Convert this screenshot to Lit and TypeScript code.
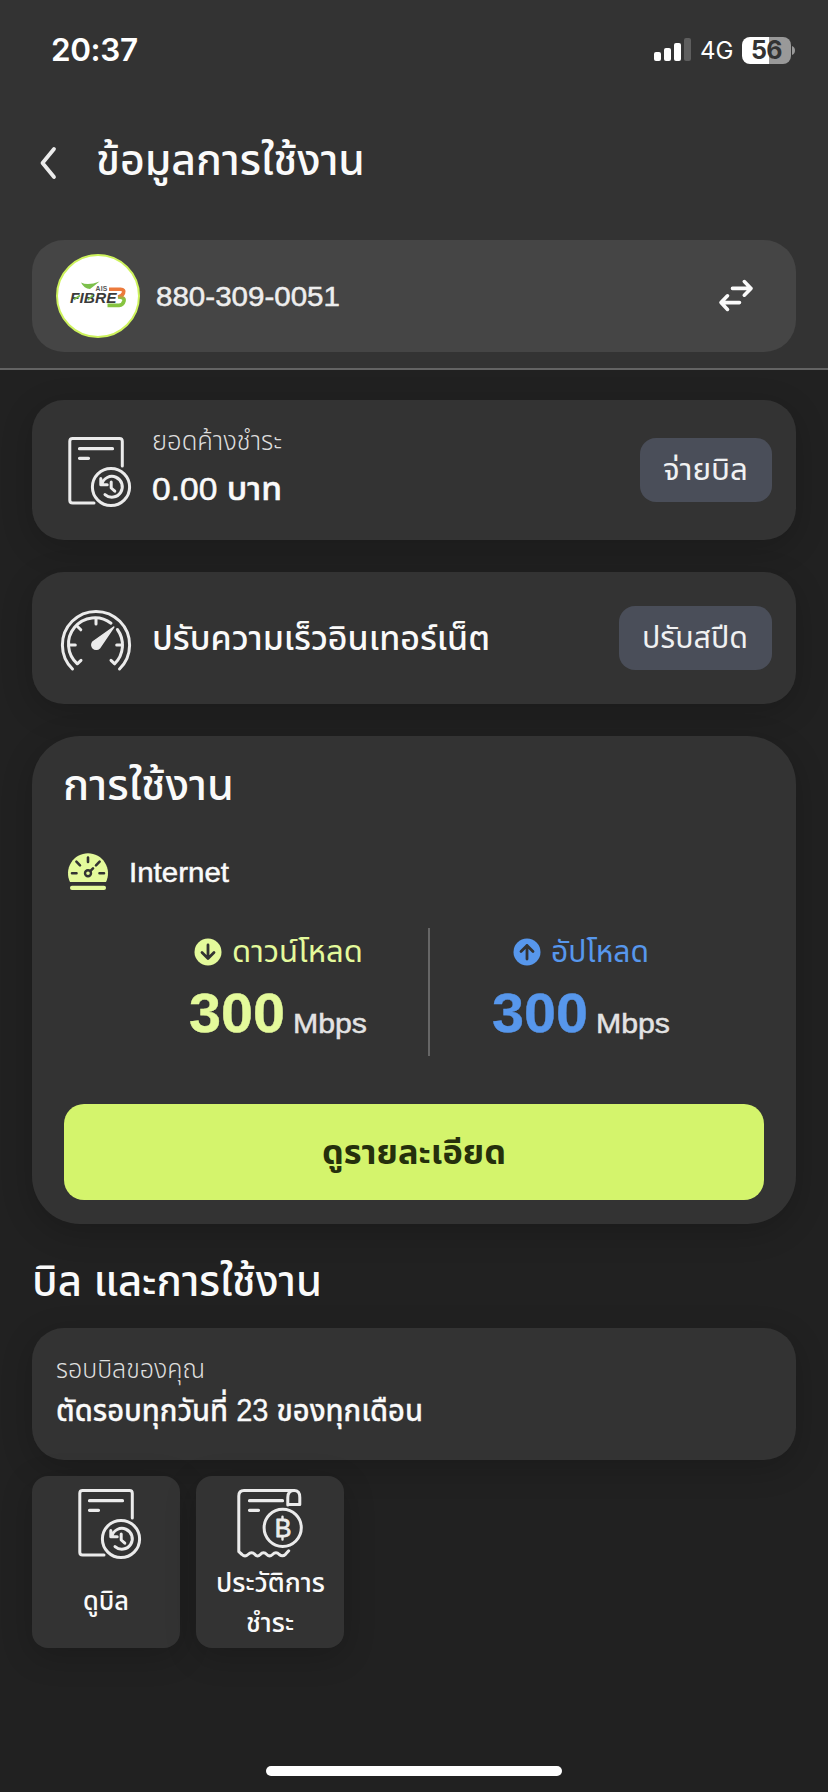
import { LitElement, html, css, svg } from "lit";
import { customElement, property } from "lit/decorators.js";

/* One line of text fitted to a given width; its box runs from the letter tops to the baseline. */
@customElement("fit-label")
class FitLabel extends LitElement {
  @property() text = "";
  @property({ type: Number }) w = 100;
  @property({ type: Number }) h = 20;
  @property({ type: Number }) size = 28;
  @property({ type: Number }) weight = 500;
  @property({ type: Number }) bolder = 0;
  static styles = css`
    :host { display: block; flex: none; }
    svg { display: block; overflow: visible; }
    text {
      font-family: "Liberation Sans", "Noto Sans Thai", sans-serif;
      fill: currentColor;
      stroke: currentColor;
      white-space: pre;
    }
  `;
  render() {
    return html`<svg width=${this.w} height=${this.h}>
      <text x="-1" y=${this.h} font-size=${this.size} font-weight=${this.weight}
        stroke-width=${this.bolder} textLength=${this.w + 2} lengthAdjust="spacingAndGlyphs">${this.text}</text>
    </svg>`;
  }
}

const sheetLines = svg`<path d="M19.5 18.7H52.5M19.5 28.3H28.5" stroke-width="3.2"/>`;

const billIcon = html`<svg class="line" width="80" height="80" viewBox="0 0 80 80">
  <path d="M62.3 36V11.3Q62.3 8.5 59.5 8.5H12.7Q9.8 8.5 9.8 11.3V70.2Q9.8 73 12.7 73H34"/>
  ${sheetLines}
  <circle cx="51" cy="57" r="18.6"/>
  <path d="M41.8 54.3A10.4 10.4 0 1 1 45 64.6M40.8 48.5V54.8H47.2M51.2 52V58L54.8 61.2"/>
</svg>`;

const historyIcon = html`<svg class="line" width="80" height="80" viewBox="0 0 80 80">
  <path d="M64 8.5H14Q8.8 8.5 8.8 14V69.7L12 72.5Q15 75.3 18 72.5Q21.7 69 25 72.5Q27.5 75.3 30.3 72.5Q33.5 69 36.8 72.5Q39.5 75.3 42.5 72.5Q46 69 49.3 72.5Q52.5 75.2 55.5 72.3L58.7 68.8"/>
  <path d="M57.8 23V15.5Q58 8.6 64 8.6T69.8 15.5V22.5H57.8"/>
  ${sheetLines}
  <circle cx="52.7" cy="45.8" r="18.6"/>
  <path d="M52.5 34.7V38M52.5 54.5V57.5" stroke-width="2.4"/>
  <text class="baht" x="53.2" y="54.6" text-anchor="middle">B</text>
</svg>`;

const gaugeIcon = html`<svg class="line" width="80" height="80" viewBox="0 0 80 80">
  <path d="M16.5 69A33.6 33.6 0 1 1 63.5 69"/>
  <path d="M25 60.3L21.3 63.8A26.4 26.4 0 0 1 55 23.2M61.4 29.5A26.4 26.4 0 0 1 58.7 63.8L55 60.3"/>
  <path d="M13.8 45H19.3M60.7 45H66.2M40 19V24M21.5 26.5L24.8 29.8"/>
  <path d="M57.8 27L43.5 48A4.3 4.3 0 1 1 37 41.8Z" fill="currentColor" stroke-width="1.4"/>
</svg>`;

const arrowBadge = (up: boolean) => html`<svg width="28" height="28" viewBox="-14 -14 28 28">
  <circle r="13.5" fill="currentColor"/>
  <path d=${up ? "M0 7V-6.5M-6 -.6L0 -6.6L6 -.6" : "M0 -7V6.5M-6 .6L0 6.6L6 .6"}
    fill="none" stroke="#333" stroke-width="2.8" stroke-linecap="round" stroke-linejoin="round"/>
</svg>`;

@customElement("app-root")
class AppRoot extends LitElement {
  static styles = css`
    :host { display: block; }
    * { box-sizing: border-box; }
    svg { display: block; flex: none; overflow: visible; }
    .screen {
      width: 828px; height: 1792px; overflow: hidden; background: #212121; color: #fafafa;
      display: flex; flex-direction: column; font-family: "Liberation Sans", "Noto Sans Thai", sans-serif;
    }
    .header { height: 370px; background: #333; border-bottom: 2px solid #636363; padding: 0 32px; flex: none; }
    .status { display: flex; align-items: center; justify-content: space-between; height: 100px; padding: 0 1px 0 19px; }
    .time { font: 600 31.5px/40px Inter, sans-serif; letter-spacing: -.4px; color: #fff; }
    .signals { display: flex; align-items: center; }
    .net { font: 400 24px/30px Inter, sans-serif; color: #fff; margin-left: 8px; width: 42px; padding-top: 1px; }
    .battery {
      width: 49px; height: 27px; border-radius: 8px; margin-right: 1px;
      background: linear-gradient(90deg, #fff 56%, #999 56%);
      font: 700 25px/27px Inter, sans-serif; letter-spacing: -.6px; color: #333; text-align: center;
    }
    .titlebar { display: flex; padding: 47px 0 0 8px; height: 140px; }
    .titlebar fit-label { margin: 3px 0 0 41px; }
    .account {
      height: 112px; border-radius: 32px; background: #454545; padding: 0 43px 0 24px;
      display: flex; align-items: center; color: #eee;
    }
    .account fit-label { margin-left: 17px; }
    .push { margin-left: auto; }
    .ais { font: 700 6.8px "Liberation Sans", sans-serif; fill: #555; }
    .fibre { font: italic 700 14px "Liberation Sans", sans-serif; }
    .content { padding: 30px 32px 0; display: flex; flex-direction: column; }
    .card { background: #333; border-radius: 32px; box-shadow: 0 8px 32px rgba(0, 0, 0, .2); }
    .row { display: flex; align-items: center; padding: 0 24px 0 28px; color: #fafafa; }
    .due { height: 140px; margin-bottom: 32px; }
    .due .stack { margin: -5px 0 0 13px; display: grid; gap: 28px; }
    .speed { height: 132px; margin-bottom: 32px; padding-left: 24px; }
    .speed .line { margin-top: 4px; }
    .speed fit-label.name { margin: 5px 0 0 17px; }
    .muted { color: #dedede; }
    .line { fill: none; stroke: currentColor; stroke-width: 3; stroke-linecap: round; stroke-linejoin: round; color: #ebebeb; }
    .baht { font: 400 25px "Liberation Sans", sans-serif; fill: currentColor; stroke-width: .8; }
    .pill {
      margin-left: auto; height: 64px; border-radius: 16px; background: #4a4e59; color: #f0f1f2;
      padding: 25px 25px 0 24.5px;
    }
    .usage { height: 488px; border-radius: 48px; padding: 39px 32px 24px; display: flex; flex-direction: column; }
    .usage .kind { display: flex; align-items: center; margin: 52px 0 0 4px; height: 40px; }
    .usage .kind fit-label { margin: 0 0 1px 22px; }
    .meters { display: flex; margin: 36px 33px 48px 63px; height: 128px; }
    .meter { flex: 1; display: flex; flex-direction: column; align-items: center; padding-top: 10px; }
    .meter + .meter { border-left: 2px solid #666; }
    .meter .dir { display: flex; align-items: center; height: 28px; gap: 11px; }
    .meter .dir fit-label { margin-top: 3px; }
    .meter .value { display: flex; align-items: flex-end; gap: 10px; margin-top: 26px; }
    .down { color: #e4fa9b; }
    .up { color: #5797ec; }
    .unit { color: #e3e3e3; margin-bottom: -1px; }
    .cta {
      height: 96px; border-radius: 20px; background: #d4f46c; color: #25300c;
      display: flex; justify-content: center; padding-top: 40px;
    }
    .section { margin: 48px 0 32px 1px; }
    .cycle { height: 132px; padding: 35px 25px 0; display: grid; align-content: start; gap: 24px; margin-bottom: 16px; }
    .tiles { display: flex; gap: 16px; }
    .tile { width: 148px; height: 172px; border-radius: 16px; padding-top: 6px; display: flex; flex-direction: column; align-items: center; }
    .tile .first { margin-left: 8px; }
    .tile .single { margin-top: 32px; }
    .tile .upper { margin-top: 14px; }
    .tile .lower { margin-top: 24px; }
    .home { width: 296px; height: 10px; border-radius: 5px; background: #fff; margin: auto auto 16px; }
  `;

  label(text: string, w: number, h: number, size: number, weight = 500, bolder = 0, cls = "") {
    return html`<fit-label class=${cls} .text=${text} .w=${w} .h=${h} .size=${size} .weight=${weight} .bolder=${bolder}></fit-label>`;
  }

  meter(up: boolean, name: string, w: number) {
    const tone = up ? "up" : "down";
    return html`<div class="meter">
      <div class="dir ${tone}">${arrowBadge(up)}${this.label(name, w, 17, 30, 430)}</div>
      <div class="value">
        ${this.label("300", 94, 40, 56, 700, 0.4, tone)}
        ${this.label("Mbps", 72, 20, 28, 400, 0.5, "unit")}
      </div>
    </div>`;
  }

  render() {
    return html`<div class="screen">
      <div class="header">
        <div class="status">
          <div class="time">20:37</div>
          <div class="signals">
            <svg width="38" height="24" fill="#fff">
              <rect y="14" width="7" height="9" rx="2"/><rect x="10" y="10" width="7" height="13" rx="2"/>
              <rect x="20" y="5" width="7" height="18" rx="2"/><rect x="30" width="7" height="23" rx="2" fill="#5e5e5e"/>
            </svg>
            <div class="net">4G</div>
            <div class="battery">56</div>
            <svg width="3" height="9"><path d="M0 0Q3 1.2 3 4.5T0 9Z" fill="#999"/></svg>
          </div>
        </div>
        <div class="titlebar">
          <svg width="16" height="32"><path d="M14 2L2.5 16L14 30" fill="none" stroke="#ececec" stroke-width="3.8" stroke-linecap="round" stroke-linejoin="round"/></svg>
          ${this.label("ข้อมูลการใช้งาน", 267, 25, 43, 480)}
        </div>
        <div class="account">
          <svg width="84" height="84" viewBox="0 0 84 84">
            <defs>
              <linearGradient id="three" x1="0" y1="0" x2="0" y2="1">
                <stop offset=".35" stop-color="#ec7a3c"/><stop offset=".6" stop-color="#86c440"/>
              </linearGradient>
            </defs>
            <circle cx="42" cy="42" r="41" fill="#fff" stroke="#cdf25c" stroke-width="2"/>
            <path d="M25 28.5Q32 32 43.5 27.5Q38 32 34 35Q28 34.5 25 28.5Z" fill="#7cc04b"/>
            <text class="ais" x="39.4" y="36.6" textLength="12">AIS</text>
            <path d="M53 35.3H64.5Q69 35.5 67.5 39T62 43Q69 43 68 47T63 51.4H51.5" fill="none" stroke="url(#three)" stroke-width="3.6"/>
            <text class="fibre" x="14" y="48.7" textLength="46.5" lengthAdjust="spacingAndGlyphs" fill="#3b3b3b">FIBRE</text>
            <path d="M18 45.5L24 41.5M32 46L37 41" stroke="#7cc04b" stroke-width="1.6"/>
          </svg>
          ${this.label("880-309-0051", 182, 20, 28.5, 400, 0.5)}
          <svg class="push" width="34" height="34" viewBox="0 0 34 34" fill="none" stroke="#fafafa" stroke-width="3.6" stroke-linecap="round" stroke-linejoin="round">
            <path d="M13.5 9.4H32M25.3 2.6L32 9.4L25.3 16.2M20.5 23.6H2M8.5 16.8L2 23.6L8.5 30.4"/>
          </svg>
        </div>
      </div>

      <div class="content">
        <div class="card row due">
          ${billIcon}
          <div class="stack">
            ${this.label("ยอดค้างชำระ", 128, 15, 26, 350, 0, "muted")}
            ${this.label("0.00 บาท", 128, 22, 32, 500, 0.5)}
          </div>
          <div class="pill">${this.label("จ่ายบิล", 83, 17, 30, 450)}</div>
        </div>
        <div class="card row speed">
          ${gaugeIcon}
          ${this.label("ปรับความเร็วอินเทอร์เน็ต", 336, 19, 33, 500, 0, "name")}
          <div class="pill">${this.label("ปรับสปีด", 104, 17, 30, 450)}</div>
        </div>
        <div class="card usage">
          ${this.label("การใช้งาน", 169, 25, 43, 480)}
          <div class="kind">
            <svg width="40" height="40" viewBox="0 0 40 40" fill="#e4fa9b">
              <path d="M2 30A20 20 0 1 1 38 30Z"/>
              <rect x="2" y="33.7" width="36" height="4.4" rx="2"/>
              <path d="M20 5.5V10M4 21.3H8.5M31.5 21.3H36M8.4 9.7L12 13.3M31.6 9.7L28 13.3M22 19.3L25 16.3" stroke="#333" stroke-width="2.6" stroke-linecap="round"/>
              <circle cx="20" cy="21.3" r="3" stroke="#333" stroke-width="2.4"/>
            </svg>
            ${this.label("Internet", 98, 20, 28, 400, 0.5)}
          </div>
          <div class="meters">
            ${this.meter(false, "ดาวน์โหลด", 129)}
            ${this.meter(true, "อัปโหลด", 96)}
          </div>
          <div class="cta">${this.label("ดูรายละเอียด", 182, 20, 34, 700)}</div>
        </div>
        <div class="section">${this.label("บิล และการใช้งาน", 288, 24, 43, 480)}</div>
        <div class="card cycle">
          ${this.label("รอบบิลของคุณ", 147, 15, 26, 350, 0, "muted")}
          ${this.label("ตัดรอบทุกวันที่ 23 ของทุกเดือน", 365, 19, 31, 500, 0.3)}
        </div>
        <div class="tiles">
          <div class="card tile">
            <div class="first">${billIcon}</div>
            ${this.label("ดูบิล", 44, 16, 27, 500, 0, "single")}
          </div>
          <div class="card tile">
            ${historyIcon}
            ${this.label("ประวัติการ", 107, 16, 27, 500, 0, "upper")}
            ${this.label("ชำระ", 46, 16, 27, 500, 0, "lower")}
          </div>
        </div>
      </div>
      <div class="home"></div>
    </div>`;
  }
}
